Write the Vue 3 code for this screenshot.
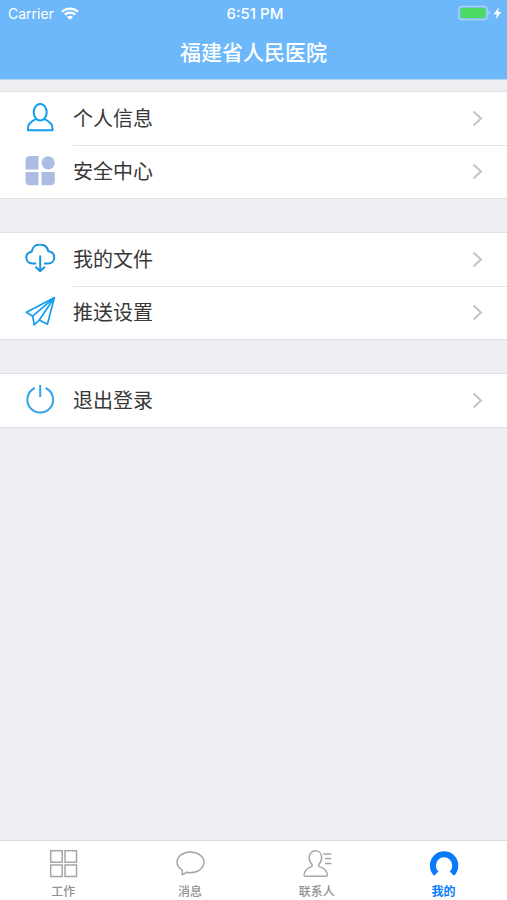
<script setup>
const groups = [
  [
    { label: '个人信息', icon: 'person' },
    { label: '安全中心', icon: 'security' },
  ],
  [
    { label: '我的文件', icon: 'cloud' },
    { label: '推送设置', icon: 'plane' },
  ],
  [{ label: '退出登录', icon: 'power' }],
]

const tabs = [
  { label: '工作', icon: 'work' },
  { label: '消息', icon: 'message' },
  { label: '联系人', icon: 'contacts' },
  { label: '我的', icon: 'mine', active: true },
]
</script>

<template>
  <div class="screen">
    <header class="top">
      <div class="status">
        <div class="carrier">
          <span>Carrier</span>
          <svg class="wifi" viewBox="0 0 18 13" aria-hidden="true">
            <path d="M1 4.6C5.6 .5 12.4 .5 17 4.6" />
            <path d="M3.8 7.6C6.8 4.9 11.2 4.9 14.2 7.6" />
            <path class="dot" d="M6 9.9C7.7 8.4 10.3 8.4 12 9.9L9 12.8Z" />
          </svg>
        </div>
        <span class="time">6:51 PM</span>
        <svg class="battery" viewBox="0 0 44 16" aria-hidden="true">
          <rect class="case" x="1" y="1.5" width="28" height="13" rx="3" />
          <rect class="charge" x="2.5" y="3" width="25" height="10" rx="1.5" />
          <path class="cap" d="M30.5 6v4c1-.4 1.6-1.1 1.6-2s-.6-1.600-1.600-2z" />
          <path class="bolt" d="M41 2L35.600 9.200H39L37.400 14.500L43.300 7H40Z" />
        </svg>
      </div>
      <h1>福建省人民医院</h1>
    </header>

    <main>
      <ul v-for="(group, i) in groups" :key="i" class="group">
        <li v-for="item in group" :key="item.label">
          <a href="#" class="row">
            <svg class="icon" viewBox="0 0 31 31" aria-hidden="true">
              <g v-if="item.icon === 'person'" class="line">
                <ellipse cx="15.2" cy="9.2" rx="6.5" ry="8.3" />
                <path d="M11 16.2C6 18.3 2.9 20.6 2.900 25.400V27.300H27.500V25.400C27.500 20.600 24.400 18.300 19.400 16.200" />
              </g>
              <g v-else-if="item.icon === 'security'" class="blocks">
                <path d="M5 0h8.500v13.500H.5V4.500Q.5 0 5 0z" />
                <circle cx="23.200" cy="6.800" r="6.600" />
                <path d="M.5 16h13v13.300H5Q.5 29.300 .5 25z" />
                <path d="M16.500 16h13.300v9q0 4.300-4.500 4.300h-8.800z" />
              </g>
              <g v-else-if="item.icon === 'cloud'" class="line deep">
                <path d="M11.200 19.500H7.500C3.800 19.500 1.300 17 1.300 13.600C1.300 10.500 3.400 8.200 6.700 7.700C7.300 3.300 10.500 .4 14.900 .4C19.100 .4 22.300 2.900 23.300 7.300C26.800 7.800 29.200 10.200 29.200 13.500C29.200 17 26.800 19.500 23 19.500H19" />
                <path d="M15.200 11.500V27M10.500 22.800L15.200 27.200L19.900 22.800" />
              </g>
              <g v-else-if="item.icon === 'plane'" class="line thin">
                <path d="M29.300 .7L1.400 15.300L7.700 19.200L9.200 27.900L14.300 23L22.400 27.200Z" />
                <path d="M7.700 19.200L29.300 .7L14.300 23" />
              </g>
              <g v-else class="line sky">
                <path d="M9.800 3A12.900 12.900 0 1 0 20.700 3" />
                <path d="M15.200 0V12" />
              </g>
            </svg>
            <span class="label">{{ item.label }}</span>
            <svg class="chevron" viewBox="0 0 11 17" aria-hidden="true">
              <path d="M1.500 1.500L9 8.500L1.500 15.500" />
            </svg>
          </a>
        </li>
      </ul>
    </main>

    <nav class="tabs">
      <a v-for="tab in tabs" :key="tab.label" href="#" class="tab" :class="{ active: tab.active }">
        <svg viewBox="0 0 30 30" aria-hidden="true">
          <g v-if="tab.icon === 'work'">
            <rect x="2.700" y="2.700" width="11.500" height="11.500" />
            <rect x="17" y="2.700" width="11.500" height="11.500" />
            <rect x="2.700" y="17" width="11.500" height="11.500" />
            <rect x="17" y="17" width="11.500" height="11.500" />
          </g>
          <path
            v-else-if="tab.icon === 'message'"
            d="M7.300 26.500V22.200C4 20.300 2.100 17.500 2.100 14.300C2.100 8.500 7.800 3.900 15.300 3.900S28.900 8.500 28.900 14.300S22.800 24.800 15.300 24.800C14 24.800 12.600 24.600 11.300 24.300C10.100 25.200 8.800 26 7.300 26.500Z"
          />
          <g v-else-if="tab.icon === 'contacts'">
            <path d="M10 16.500C8.200 14.800 7.200 12.300 7.200 9.500C7.200 5.500 9.800 2.800 13.400 2.800S19.600 5.500 19.600 9.500C19.600 12.300 18.600 14.800 16.800 16.500C16.300 17.800 16.700 18.400 18 18.900C22.200 20.300 25.100 22.300 25.400 27Q25.400 28.300 24.100 28.300H3.400Q2.100 28.300 2.100 27C2.400 22.300 5.100 20.300 8.900 18.900C10.200 18.400 10.500 17.800 10 16.500Z" />
            <path d="M21.500 6H29.300M23 10.500H29.300M23 15.500H29.300" />
          </g>
          <path v-else class="ring" d="M7.300 25.600A11.200 11.200 0 1 1 22.900 25.600" />
        </svg>
        <span>{{ tab.label }}</span>
      </a>
    </nav>
  </div>
</template>

<style>
body {
  background: #efeef3;
}
</style>

<style scoped>
.screen {
  display: flex;
  flex-direction: column;
  min-height: 100vh;
  background: #efeef3;
  font-family: Inter, "Noto Sans CJK SC", sans-serif;
}

svg {
  display: block;
  flex: none;
  fill: none;
}

a {
  color: inherit;
  text-decoration: none;
}

.top {
  height: 80px;
  background: #6cb8fa;
  border-bottom: 1px solid #b9d6ef;
  box-sizing: border-box;
  color: #fff;
}

.status {
  display: grid;
  grid-template-columns: 1fr auto 1fr;
  align-items: center;
  height: 26px;
  padding: 0 5px 0 8px;
  font-size: 14px;
}

.carrier {
  display: flex;
  align-items: center;
  gap: 7px;
}

.wifi {
  width: 18px;
  height: 13px;
  stroke: #fff;
  stroke-width: 2.2;
}

.wifi .dot {
  fill: #fff;
  stroke: none;
}

.time {
  font-size: 15px;
  font-weight: 500;
}

.battery {
  justify-self: end;
  width: 44px;
  height: 16px;
}

.case {
  stroke: #a9d6e6;
  stroke-width: 1.4;
}

.charge {
  fill: #4cd964;
}

.cap {
  fill: #a9d6f5;
}

.bolt {
  fill: #fff;
}

h1 {
  margin: 0;
  font-size: 21px;
  font-weight: 500;
  line-height: 54px;
  text-align: center;
}

main {
  display: flex;
  flex: 1;
  flex-direction: column;
  gap: 33px;
  padding: 11px 0 33px;
}

.group {
  margin: 0;
  padding: 0;
  border: solid #e2e1e5;
  border-width: 1px 0;
  background: #fff;
  list-style: none;
}

.row {
  display: flex;
  align-items: center;
  height: 53px;
  padding-left: 25px;
}

.icon {
  width: 31px;
  height: 31px;
  margin-right: 17px;
}

.label {
  flex: 1;
  padding-top: 1px;
  color: #383838;
  font-size: 20px;
  line-height: 52px;
}

.chevron {
  width: 11px;
  height: 17px;
  margin-right: 24px;
  stroke: #c4c4c8;
  stroke-width: 2;
}

li + li {
  background: linear-gradient(#e4e4e6, #e4e4e6) 73px 0 / 100% 1px no-repeat;
}

.line {
  stroke: #149df0;
  stroke-width: 2;
  stroke-linejoin: round;
}

.deep {
  stroke: #1b94dc;
}

.thin {
  stroke-width: 1.7;
}

.sky {
  stroke: #35a3ea;
}

.blocks {
  fill: #abbde2;
}

.tabs {
  display: grid;
  grid-template-columns: repeat(4, 1fr);
  height: 60px;
  border-top: 1px solid #dddce1;
  box-sizing: border-box;
  background: #fff;
}

.tab {
  display: flex;
  flex-direction: column;
  align-items: center;
  padding-top: 7px;
  color: #929292;
  font-size: 12px;
  font-weight: 500;
  line-height: 16px;
}

.tab svg {
  width: 30px;
  height: 30px;
  margin-bottom: 6px;
  stroke: #a6a6a6;
  stroke-width: 1.5;
}

.active {
  color: #087bfa;
  font-weight: 700;
}

.tab .ring {
  stroke: #087bfa;
  stroke-width: 6;
}
</style>
